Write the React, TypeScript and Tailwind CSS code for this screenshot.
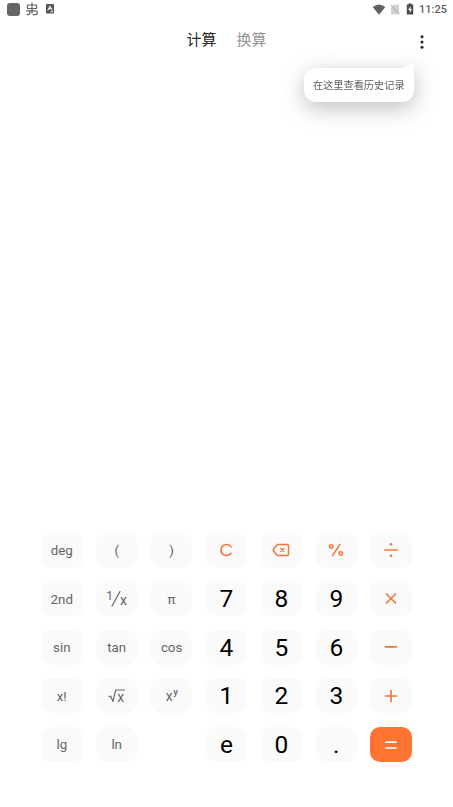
import type { ReactNode } from 'react';

type KeyKind = 'func' | 'digit' | 'action' | 'equal';

interface CalcKey {
  id: string;
  kind: KeyKind;
  label: ReactNode;
}

const KIND_CLASS: Record<KeyKind, string> = {
  func: 'bg-[#fafafa] pt-px text-[13.3px] text-[#646464]',
  digit: 'bg-[#fafafa] pt-px text-[24.5px] text-black',
  action: 'bg-[#fafafa] text-[#f5743c]',
  equal: 'bg-[#ff7433] text-white',
};

const strokeProps = {
  fill: 'none',
  stroke: 'currentColor',
  strokeLinecap: 'round',
  strokeLinejoin: 'round',
} as const;

function Reciprocal() {
  return (
    <svg width="24" height="24" viewBox="-1 -3 24 24" fill="currentColor">
      <text x="0.3" y="9.5" fontSize="12">1</text>
      <path d="M6 16 14 1.500" {...strokeProps} strokeWidth="1.2" />
      <text x="14" y="15.300" fontSize="14">x</text>
    </svg>
  );
}

function SquareRoot() {
  return (
    <svg width="20" height="22" viewBox="-1 -3 20 22" fill="currentColor">
      <path d="M1 8.800 2.600 8l2.300 5.500L7.700 2h8.800" {...strokeProps} strokeWidth="1.1" />
      <text x="9.200" y="13.500" fontSize="14">x</text>
    </svg>
  );
}

function Power() {
  return (
    <svg width="20" height="24" viewBox="-2 -4 20 24" fill="currentColor">
      <text x="1.800" y="12.500" fontSize="14">x</text>
      <text x="9.200" y="7.300" fontSize="9.5" fontWeight="500">y</text>
    </svg>
  );
}

function ClearIcon() {
  return (
    <svg width="14" height="14" viewBox="0 0 14 14">
      <path d="M11.900 3.700A5.500 5.500 0 1 0 11.900 10.300" {...strokeProps} strokeWidth="1.7" />
    </svg>
  );
}

function BackspaceIcon() {
  return (
    <svg width="18" height="14" viewBox="0 0 18 14">
      <path d="M6 1.500h9.200q1.300 0 1.300 1.300v8.400q0 1.300-1.300 1.300H6q-.7 0-1.200-.6L1.500 7.800q-.5-.8 0-1.600L4.800 2.100Q5.300 1.500 6 1.500Z" {...strokeProps} strokeWidth="1.5" />
      <path d="m8.800 5.500 3 3m0-3-3 3" {...strokeProps} strokeWidth="1.5" />
    </svg>
  );
}

function PercentIcon() {
  return (
    <svg width="16" height="14" viewBox="0 0 16 14">
      <g {...strokeProps} strokeWidth="1.5">
        <path d="M12 1.300 4.500 12.700" />
        <circle cx="3.200" cy="3.500" r="1.700" />
        <circle cx="12.800" cy="10.500" r="1.700" />
      </g>
    </svg>
  );
}

function DivideIcon() {
  return (
    <svg width="16" height="16" viewBox="0 0 16 16">
      <path d="M1.800 8h12.400" {...strokeProps} strokeWidth="1.600" />
      <circle cx="8" cy="2.300" r="1.300" fill="currentColor" />
      <circle cx="8" cy="13.700" r="1.300" fill="currentColor" />
    </svg>
  );
}

function LineIcon({ d }: { d: string }) {
  return (
    <svg width="16" height="16" viewBox="0 0 16 16">
      <path d={d} {...strokeProps} strokeWidth="1.7" />
    </svg>
  );
}

const KEYS: (CalcKey | null)[] = [
  { id: 'deg', kind: 'func', label: 'deg' },
  { id: 'open', kind: 'func', label: '(' },
  { id: 'close', kind: 'func', label: ')' },
  { id: 'clear', kind: 'action', label: <ClearIcon /> },
  { id: 'back', kind: 'action', label: <BackspaceIcon /> },
  { id: 'percent', kind: 'action', label: <PercentIcon /> },
  { id: 'divide', kind: 'action', label: <DivideIcon /> },

  { id: '2nd', kind: 'func', label: '2nd' },
  { id: 'reciprocal', kind: 'func', label: <Reciprocal /> },
  { id: 'pi', kind: 'func', label: 'π' },
  { id: '7', kind: 'digit', label: '7' },
  { id: '8', kind: 'digit', label: '8' },
  { id: '9', kind: 'digit', label: '9' },
  { id: 'multiply', kind: 'action', label: <LineIcon d="m3.500 3 9 9m0-9-9 9" /> },

  { id: 'sin', kind: 'func', label: 'sin' },
  { id: 'tan', kind: 'func', label: 'tan' },
  { id: 'cos', kind: 'func', label: 'cos' },
  { id: '4', kind: 'digit', label: '4' },
  { id: '5', kind: 'digit', label: '5' },
  { id: '6', kind: 'digit', label: '6' },
  { id: 'minus', kind: 'action', label: <LineIcon d="M2.500 7.800h11" /> },

  { id: 'factorial', kind: 'func', label: 'x!' },
  { id: 'sqrt', kind: 'func', label: <SquareRoot /> },
  { id: 'power', kind: 'func', label: <Power /> },
  { id: '1', kind: 'digit', label: '1' },
  { id: '2', kind: 'digit', label: '2' },
  { id: '3', kind: 'digit', label: '3' },
  { id: 'plus', kind: 'action', label: <LineIcon d="M2.500 8h11M8 2.500v11" /> },

  { id: 'lg', kind: 'func', label: 'lg' },
  { id: 'ln', kind: 'func', label: 'ln' },
  null,
  { id: 'e', kind: 'digit', label: 'e' },
  { id: '0', kind: 'digit', label: '0' },
  { id: 'dot', kind: 'digit', label: '.' },
  { id: 'equal', kind: 'equal', label: <LineIcon d="M3 5.200h10M3 11h10" /> },
];

function StatusBar() {
  return (
    <div className="flex h-[18px] items-center justify-between pr-[6px] pl-[7px] text-[#616161]">
      <div className="flex items-center">
        <div className="h-[13px] w-[13px] rounded-[3px] bg-[#666]"></div>
        <svg className="ml-[5px]" width="14" height="14" viewBox="0 0 14 14">
          <g {...strokeProps} strokeWidth="1.2">
            <path d="M2.500 3h9v3.500h-9zM7 .8v10.400M1.800 8.900h8.500q2 0 2 1.900t-2 1.900h-2M4.800 8.900v2q0 1.700-2.500 1.800" />
          </g>
        </svg>
        <svg className="ml-[7px]" width="8" height="10" viewBox="0 0 8 10">
          <rect width="8" height="9.500" rx="1" fill="#555" />
          <path d="m2 6 2-4 2 4M2.700 4.800h2.600M5 7.700h1.500" {...strokeProps} stroke="white" strokeWidth="1" />
        </svg>
      </div>
      <div className="flex items-center">
        <svg width="14" height="11" viewBox="0 0 14 11" fill="currentColor">
          <path d="M7 10.700.7 3Q7-2 13.300 3Z" />
        </svg>
        <svg className="ml-[4px]" width="10" height="11" viewBox="0 0 10 11">
          <path d="M3.500.7H9v9.600H1V3.200Z" fill="#d0d0d0" />
          <path d="m.8.8 8.700 9.400" stroke="#aaa" strokeWidth="1" />
        </svg>
        <svg className="ml-[6px]" width="8" height="12" viewBox="0 0 8 12">
          <path d="M2.500.5h3v1h1.700v10H.8v-10h1.700Z" fill="#4a4a4a" />
          <path d="M4.500 3 2.200 7h1.500v3L6 6H4.500Z" fill="white" />
        </svg>
        <span className="ml-[5px] pt-px text-[11px] leading-none font-medium">11:25</span>
      </div>
    </div>
  );
}

function HistoryTip() {
  return (
    <div className="absolute top-[29px] right-[11px] w-[110.5px] drop-shadow-[0_6px_11px_rgba(0,0,0,0.25)]">
      <svg className="ml-auto block" width="12" height="4" viewBox="0 0 12 4" fill="white">
        <path d="M0 4C4 4 7 .2 11 .2Q12 .2 12 1V4Z" />
      </svg>
      <div className="flex h-[34px] items-center justify-center rounded-[12px] rounded-tr-none bg-white pt-px text-[10.2px] whitespace-nowrap text-[#606060]">
        在这里查看历史记录
      </div>
    </div>
  );
}

function Header() {
  return (
    <header className="grid h-[44px] grid-cols-[1fr_auto_1fr] items-center">
      <div />
      <nav className="flex gap-5 text-[15px] leading-none">
        <button type="button" className="text-[#262626]">计算</button>
        <button type="button" className="text-[#969696]">换算</button>
      </nav>
      <div className="flex justify-end pt-1 pr-[28px]">
        <div className="relative">
          <svg width="6" height="14" viewBox="0 0 6 14" fill="#242424">
            <circle cx="3" cy="1.700" r="1.500" />
            <circle cx="3" cy="7" r="1.500" />
            <circle cx="3" cy="12.300" r="1.500" />
          </svg>
          <HistoryTip />
        </div>
      </div>
    </header>
  );
}

export default function App() {
  return (
    <div className="flex h-screen w-full flex-col overflow-hidden bg-white font-[Roboto,'Noto_Sans_CJK_SC',sans-serif]">
      <StatusBar />
      <Header />
      <main className="flex-1" />
      <div className="grid grid-cols-7 gap-x-[13.4px] gap-y-[13.6px] pr-[41px] pb-[45px] pl-[41px]">
        {KEYS.map((key, i) =>
          key ? (
            <button
              key={key.id}
              type="button"
              className={`flex h-[35px] items-center justify-center rounded-[10px] leading-none ${KIND_CLASS[key.kind]}`}
            >
              {key.label}
            </button>
          ) : (
            <div key={i} />
          ),
        )}
      </div>
    </div>
  );
}
